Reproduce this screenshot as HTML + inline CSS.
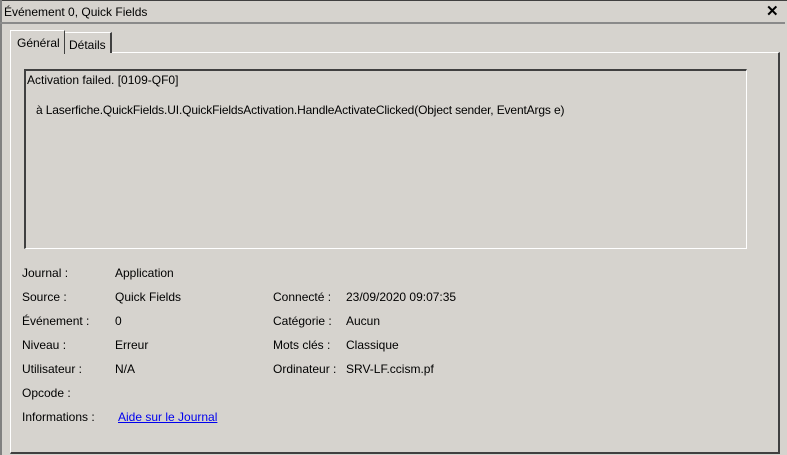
<!DOCTYPE html>
<html><head><meta charset="utf-8"><style>
*{margin:0;padding:0;box-sizing:border-box}
body{width:787px;height:455px;background:#d6d3ce;font-family:"Liberation Sans",Tahoma,sans-serif;font-size:12px;color:#000;position:relative;overflow:hidden}
.a{position:absolute;white-space:nowrap}
</style></head><body>
<div class="a" style="left:0;top:0;width:787px;height:1px;background:#404040"></div>
<div class="a" style="left:0;top:0;width:2px;height:455px;background:#808080"></div>
<div class="a" style="left:4px;top:5px;">Événement 0, Quick Fields</div>
<div class="a" style="left:766px;top:2px;font-weight:bold;font-size:15px">✕</div>
<div class="a" style="left:0;top:22px;width:785px;height:2px;background:#8a8a8a"></div>
<div class="a" style="left:10px;top:52px;width:770px;height:402px;border-top:1px solid #fff;border-left:1px solid #fff;border-right:2px solid #404040;border-bottom:2px solid #404040"></div>
<div class="a" style="left:64px;top:32px;width:48px;height:21px;border:1px solid #fff;border-bottom:none;border-right:2px solid #404040;background:#d6d3ce;padding:5px 0 0 4px">Détails</div>
<div class="a" style="left:10px;top:30px;width:55px;height:24px;border:1px solid #fff;border-bottom:none;border-right:1px solid #404040;background:#d6d3ce;padding:5px 0 0 6px">Général</div>
<div class="a" style="left:24px;top:69px;width:723px;height:180px;border-top:2px solid #404040;border-left:2px solid #404040;border-right:1px solid #fff;border-bottom:1px solid #fff"></div>
<div class="a" style="left:27px;top:73px">Activation failed. [0109-QF0]</div>
<div class="a" style="left:36px;top:103px;letter-spacing:-0.14px">à Laserfiche.QuickFields.UI.QuickFieldsActivation.HandleActivateClicked(Object sender, EventArgs e)</div>
<div class="a" style="left:22px;top:266px">Journal :</div><div class="a" style="left:115px;top:266px">Application</div>
<div class="a" style="left:22px;top:290px">Source :</div><div class="a" style="left:115px;top:290px">Quick Fields</div>
<div class="a" style="left:22px;top:314px">Événement :</div><div class="a" style="left:115px;top:314px">0</div>
<div class="a" style="left:22px;top:338px">Niveau :</div><div class="a" style="left:115px;top:338px">Erreur</div>
<div class="a" style="left:22px;top:362px">Utilisateur :</div><div class="a" style="left:115px;top:362px">N/A</div>
<div class="a" style="left:22px;top:386px">Opcode :</div>
<div class="a" style="left:22px;top:410px">Informations :</div><div class="a" style="left:118px;top:410px;color:#0000ee;text-decoration:underline">Aide sur le Journal</div>
<div class="a" style="left:273px;top:290px">Connecté :</div><div class="a" style="left:346px;top:290px">23/09/2020 09:07:35</div>
<div class="a" style="left:273px;top:314px">Catégorie :</div><div class="a" style="left:346px;top:314px">Aucun</div>
<div class="a" style="left:273px;top:338px">Mots clés :</div><div class="a" style="left:346px;top:338px">Classique</div>
<div class="a" style="left:273px;top:362px">Ordinateur :</div><div class="a" style="left:346px;top:362px">SRV-LF.ccism.pf</div>
</body></html>
